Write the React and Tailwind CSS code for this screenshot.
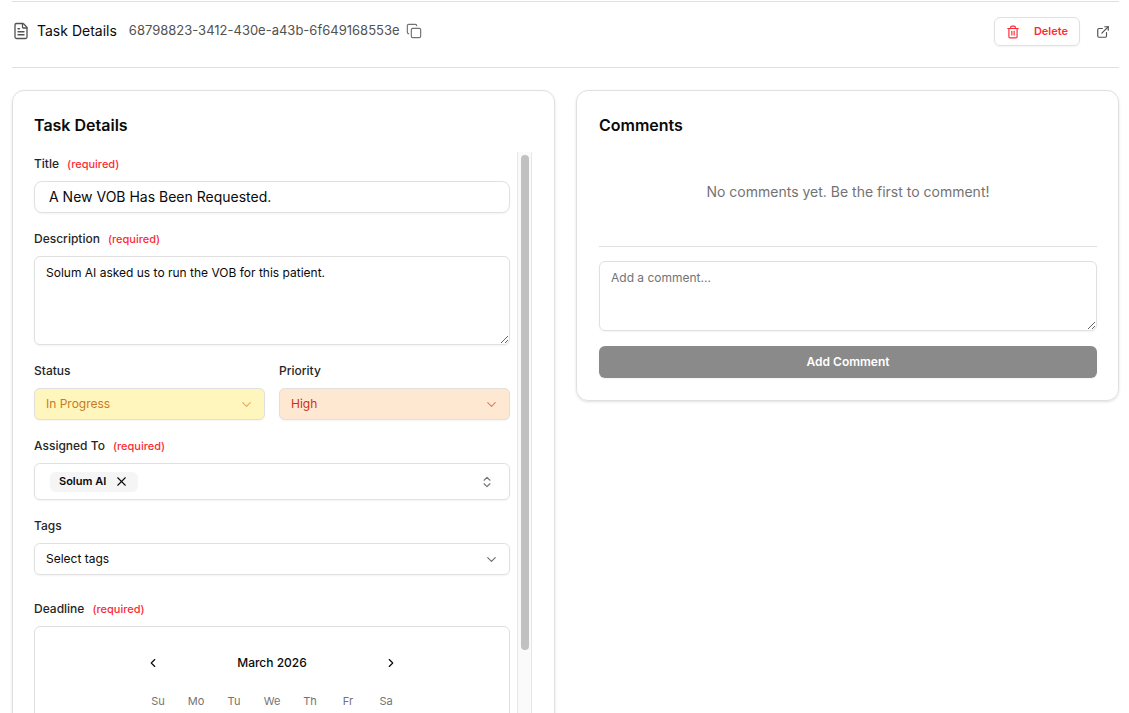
import { useState } from "react";
import {
  FileText,
  Copy,
  Trash2,
  ExternalLink,
  ChevronDown,
  ChevronsUpDown,
  ChevronLeft,
  ChevronRight,
  X,
} from "lucide-react";

const WEEKDAYS = ["Su", "Mo", "Tu", "We", "Th", "Fr", "Sa"];

export default function App() {
  return (
    <div className="h-screen overflow-hidden bg-white pt-px pl-3 pr-2.5 font-['Inter',sans-serif] text-xs text-neutral-950">
      <TaskHeader id="68798823-3412-430e-a43b-6f649168553e" />
      <main className="mt-[22px] grid grid-cols-2 items-start gap-[21px]">
        <TaskForm />
        <Comments />
      </main>
    </div>
  );
}

function TaskHeader({ id }) {
  return (
    <header className="flex items-center justify-between border-y border-[#e0e0e0] pt-[15px] pb-[21px]">
      <div className="flex items-center pb-0.5">
        <FileText size={18} strokeWidth={1.75} className="text-neutral-600" />
        <h1 className="ml-[7px] text-sm leading-5">Task Details</h1>
        <span className="ml-3 text-[13px] text-neutral-600">{id}</span>
        <button type="button" aria-label="Copy task id" className="ml-1.5 text-neutral-500">
          <Copy size={16} strokeWidth={1.75} />
        </button>
      </div>
      <div className="flex items-center">
        <button
          type="button"
          className="flex h-[29px] items-center gap-3.5 rounded-md border border-[#e0e0e0] px-[11px] text-[11px] font-semibold text-red-500 shadow-xs"
        >
          <Trash2 size={14} /> Delete
        </button>
        <a href="#task" aria-label="Open in new tab" className="mr-[9px] ml-4 text-neutral-600">
          <ExternalLink size={14} />
        </a>
      </div>
    </header>
  );
}

function TaskForm() {
  return (
    <section className="rounded-xl border border-[#e0e0e0] px-[21px] pt-5 shadow-sm">
      <h2 className="text-base leading-7 font-semibold">Task Details</h2>
      <div className="mt-[13px] mr-px flex gap-[7px]">
        <form className="flex min-w-0 flex-1 flex-col gap-4 pt-0.5">
          <Field id="title" label="Title" required>
            <input
              id="title"
              defaultValue="A New VOB Has Been Requested."
              className="h-8 w-full rounded-lg border border-[#e0e0e0] px-3.5 pb-0.5 text-sm shadow-xs"
            />
          </Field>

          <Field id="description" label="Description" required>
            <textarea
              id="description"
              defaultValue="Solum AI asked us to run the VOB for this patient."
              className="block h-[89px] w-full rounded-md border border-[#e0e0e0] px-[11px] py-1.5 leading-5 shadow-xs"
            />
          </Field>

          <div className="grid grid-cols-2 gap-3.5">
            <Field id="status" label="Status">
              <Select id="status" value="In Progress" className="bg-[#fff6bd] text-[#ca7a1d]" />
            </Field>
            <Field id="priority" label="Priority">
              <Select id="priority" value="High" className="bg-[#ffe8d1] text-[#cf2f18]" />
            </Field>
          </div>

          <Field id="assignee" label="Assigned To" required>
            <div className="flex h-[37px] items-center justify-between rounded-md border border-[#e0e0e0] px-[15px] shadow-xs">
              <span className="flex h-5 items-center gap-2 rounded-md bg-neutral-100 px-[9px] text-[11px] font-semibold">
                Solum AI
                <button type="button" aria-label="Remove Solum AI">
                  <X size={15} strokeWidth={1.75} />
                </button>
              </span>
              <button id="assignee" type="button" aria-label="Choose assignee" className="text-neutral-500">
                <ChevronsUpDown size={14} />
              </button>
            </div>
          </Field>

          <Field id="tags" label="Tags">
            <Select id="tags" value="Select tags" className="text-neutral-950" />
          </Field>

          <div className="pt-2">
            <Field id="deadline" label="Deadline" required>
              <Calendar id="deadline" />
            </Field>
          </div>
        </form>

        {/* Scroll track */}
        <div className="w-[15px] shrink-0 border-x border-[#e6e6e6] bg-neutral-50 px-[3px] pt-[3px]">
          <div className="h-[495px] w-2 rounded-full bg-[#c1c1c1]" />
        </div>
      </div>
    </section>
  );
}

function Field({ id, label, required, children }) {
  return (
    <div>
      <label htmlFor={id} className="mb-[7px] flex items-center gap-2 leading-5 font-medium text-neutral-800">
        {label}
        {required && <span className="text-[11px] text-red-500">(required)</span>}
      </label>
      {children}
    </div>
  );
}

function Select({ id, value, className }) {
  return (
    <div className={`relative rounded-md shadow-xs ${className}`}>
      <select id={id} className="block h-8 w-full appearance-none rounded-md border border-[#e0e0e0] px-[11px]">
        <option>{value}</option>
      </select>
      <ChevronDown
        size={15}
        strokeWidth={1.75}
        className="pointer-events-none absolute top-[9px] right-[11px] opacity-60"
      />
    </div>
  );
}

function Calendar({ id }) {
  const [month] = useState("March 2026");

  return (
    <div id={id} className="flex h-[330px] flex-col items-center rounded-md border border-[#e0e0e0] pt-[22px]">
      <div className="flex h-7 w-[266px] items-center justify-between">
        <button type="button" aria-label="Previous month" className="flex size-7 items-center justify-center">
          <ChevronLeft size={14} />
        </button>
        <span className="font-medium">{month}</span>
        <button type="button" aria-label="Next month" className="flex size-7 items-center justify-center">
          <ChevronRight size={14} />
        </button>
      </div>
      <table className="mt-3.5 w-[266px] table-fixed">
        <thead>
          <tr>
            {WEEKDAYS.map((day) => (
              <th key={day} scope="col" className="p-0 text-[11px] leading-5 font-normal text-neutral-500">
                {day}
              </th>
            ))}
          </tr>
        </thead>
      </table>
    </div>
  );
}

function Comments() {
  return (
    <section className="rounded-xl border border-[#e0e0e0] pt-5 pr-[21px] pb-[22px] pl-[22px] shadow-sm">
      <h2 className="text-base leading-7 font-semibold">Comments</h2>
      <p className="pt-[43px] pb-11 text-center text-sm leading-5 text-neutral-500">
        No comments yet. Be the first to comment!
      </p>
      <form className="border-t border-[#e0e0e0] pt-3.5">
        <textarea
          aria-label="Add a comment"
          placeholder="Add a comment..."
          className="block h-[70px] w-full rounded-md border border-[#e0e0e0] px-[11px] py-1.5 leading-5 shadow-xs placeholder:text-neutral-500"
        />
        <button
          type="button"
          className="mt-[15px] h-8 w-full rounded-md bg-[#8a8a8a] font-semibold text-white shadow-xs"
        >
          Add Comment
        </button>
      </form>
    </section>
  );
}
